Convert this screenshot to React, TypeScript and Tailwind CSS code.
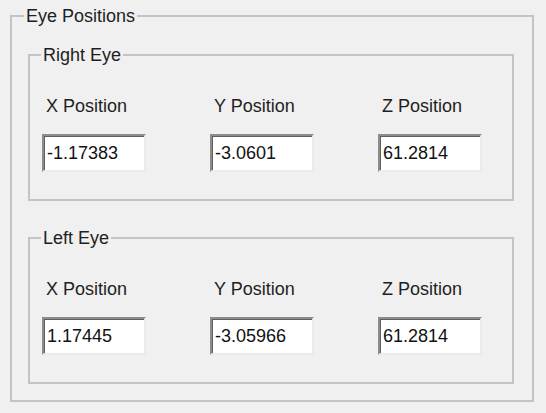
const font = { fontFamily: '"Liberation Sans", Arial, sans-serif' }

interface EyeGroup {
  title: string
  values: [string, string, string]
}

const groups: EyeGroup[] = [
  { title: 'Right Eye', values: ['-1.17383', '-3.0601', '61.2814'] },
  { title: 'Left Eye', values: ['1.17445', '-3.05966', '61.2814'] },
]

const axes = ['X Position', 'Y Position', 'Z Position']

function PositionGroup({ group }: { group: EyeGroup }) {
  return (
    <fieldset className="w-[486px] h-[156px] border-2 border-[#c4c4c4] p-0 m-0 min-w-0">
      <legend className="ml-[11px] px-[2px] text-[18px] leading-[20px] text-[#1e1e1e]">{group.title}</legend>
      <div className="grid grid-cols-[168px_168px_104px] pl-[12px] pt-[31px]">
        {axes.map((axis, i) => (
          <div key={axis} className="flex flex-col">
            <span className="pl-[4px] text-[18px] leading-[20px] text-[#1e1e1e]">{axis}</span>
            <input
              readOnly
              value={group.values[i]}
              style={font}
              className="mt-[18px] w-[104px] h-[38px] bg-white pl-[3px] text-[18px] text-[#111] outline-none border-2 border-t-[#8c8c8c] border-l-[#8c8c8c] border-b-[#ebebeb] border-r-[#ebebeb] shadow-[inset_1px_1px_0_#5f5f5f]"
            />
          </div>
        ))}
      </div>
    </fieldset>
  )
}

export default function App() {
  return (
    <div className="w-[546px] h-[413px] bg-[#f0f0f0] pl-[10px] pt-[6px]" style={font}>
      <fieldset className="w-[524px] h-[396px] border-2 border-[#c4c4c4] p-0 m-0 min-w-0">
        <legend className="ml-[12px] px-[2px] text-[18px] leading-[20px] text-[#1e1e1e]">Eye Positions</legend>
        <div className="flex flex-col gap-[27px] pl-[16px] pt-[19px]">
          {groups.map((g) => (
            <PositionGroup key={g.title} group={g} />
          ))}
        </div>
      </fieldset>
    </div>
  )
}
